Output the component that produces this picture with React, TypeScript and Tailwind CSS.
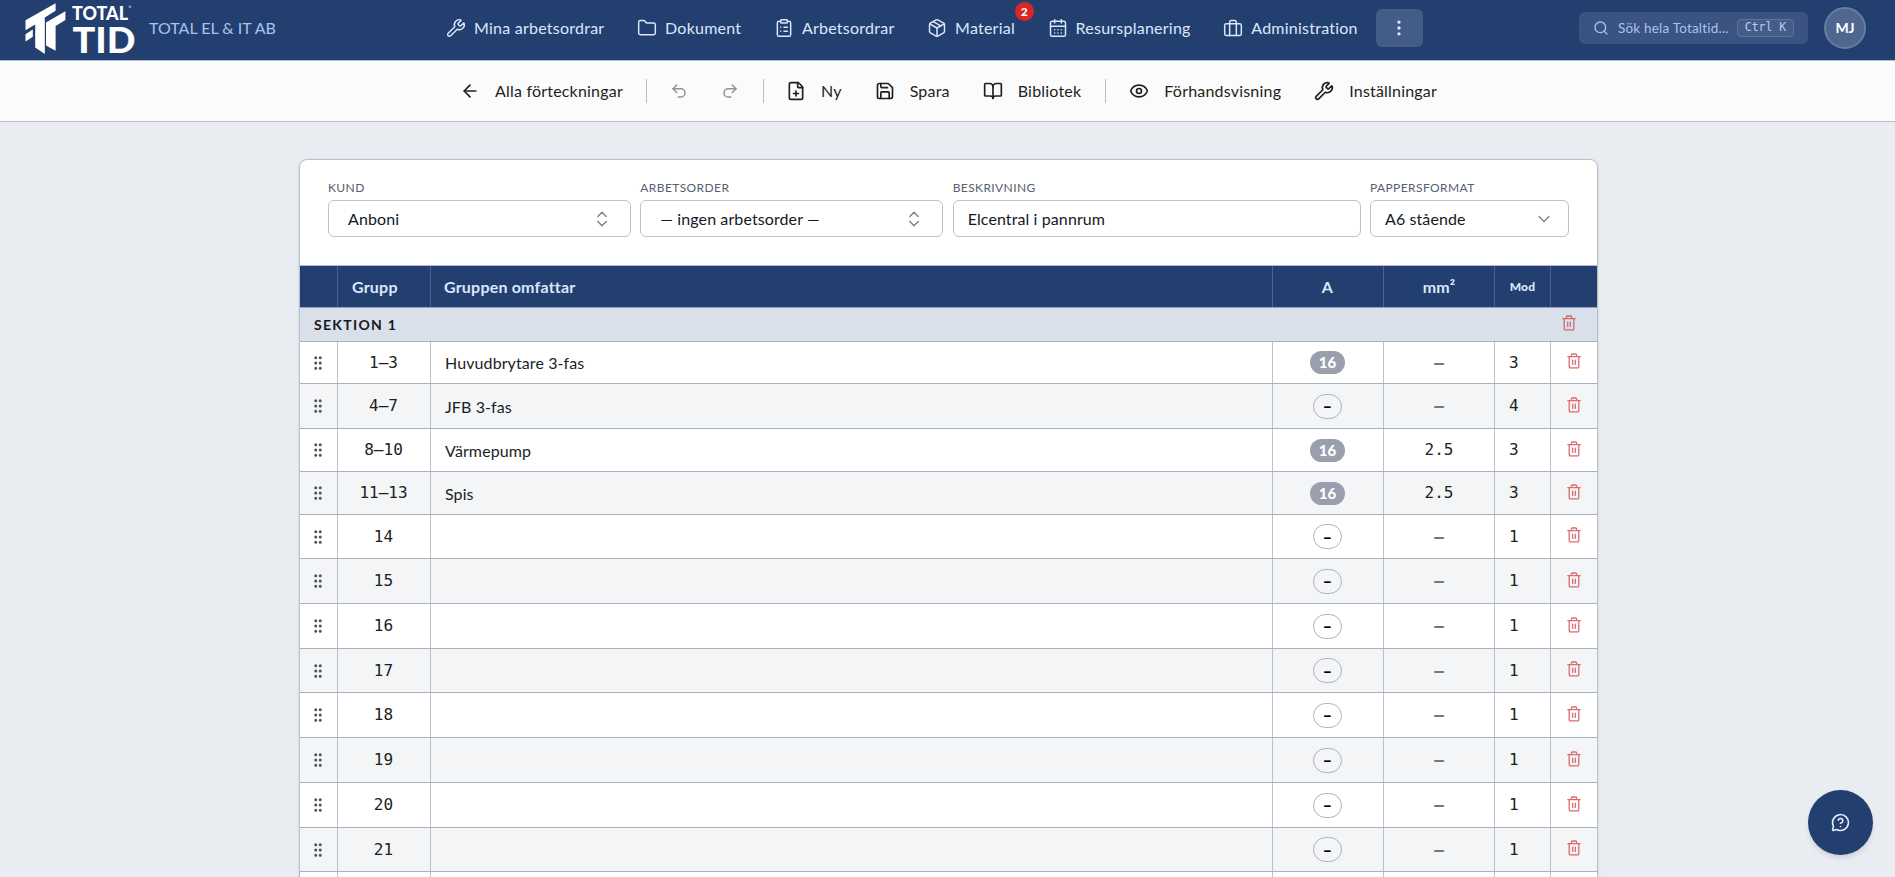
import {
  ArrowLeft,
  BookOpen,
  CalendarDays,
  ChevronDown,
  ChevronsUpDown,
  ClipboardList,
  EllipsisVertical,
  Eye,
  FilePlus,
  Folder,
  GripVertical,
  MessageCircleQuestion,
  Package,
  Redo2,
  Save,
  Search,
  Undo2,
  Wrench,
} from "lucide-react";
import { clsx } from "clsx";
import type { ReactNode } from "react";

type TRow = {
  group: string;
  text?: string;
  amp?: string;
  area?: string;
  mod: number;
  height: string;
};

const rows: TRow[] = [
  { group: "1–3", text: "Huvudbrytare 3-fas", amp: "16", mod: 3, height: "h-[42px]" },
  { group: "4–7", text: "JFB 3-fas", mod: 4, height: "h-[45px]" },
  { group: "8–10", text: "Värmepump", amp: "16", area: "2.5", mod: 3, height: "h-[43px]" },
  { group: "11–13", text: "Spis", amp: "16", area: "2.5", mod: 3, height: "h-[43px]" },
  { group: "14", mod: 1, height: "h-[44px]" },
  { group: "15", mod: 1, height: "h-[45px]" },
  { group: "16", mod: 1, height: "h-[45px]" },
  { group: "17", mod: 1, height: "h-[44px]" },
  { group: "18", mod: 1, height: "h-[45px]" },
  { group: "19", mod: 1, height: "h-[45px]" },
  { group: "20", mod: 1, height: "h-[45px]" },
  { group: "21", mod: 1, height: "h-[44px]" },
];

const columns = "grid grid-cols-[38px_93px_842px_111px_111px_56px_46px]";

const BriefcaseIcon = () => (
  <svg width="20" height="20" viewBox="0 0 24 24" fill="none" stroke="currentColor" strokeWidth="1.75" strokeLinecap="round" strokeLinejoin="round">
    <rect x="2" y="7" width="20" height="14" rx="2" />
    <path d="M16 21V5a2 2 0 0 0-2-2h-4a2 2 0 0 0-2 2v16" />
  </svg>
);

const TrashIcon = () => (
  <svg width="14" height="16" viewBox="0 0 14 16" fill="none" stroke="currentColor" strokeWidth="1.3" strokeLinecap="round" strokeLinejoin="round">
    <path d="M.8 3.6h12.4M4.4 3.4V1.9c0-.6.3-.9.9-.9h3.4c.6 0 .9.3.9.9v1.5M2.2 3.8v9.9c0 .8.4 1.2 1.2 1.2h7.2c.8 0 1.2-.4 1.2-1.2V3.8M5.7 7.2v4.2M8.3 7.2v4.2" />
  </svg>
);

const Logo = () => (
  <svg width="112" height="56" viewBox="0 0 112 56" fill="#fff" className="shrink-0 overflow-visible">
    <path d="M.5 20.3 30.6 3.3v7.4L19.8 17.6V54l-9.6-6.5V24.6L.5 30.3z" />
    <path d="M.5 34.2 7.8 29.6v7.2L.5 41.6z" />
    <path d="M21 22.6 40.4 11.3v8.6L30.6 26v24.8L21 45.6z" />
    <text x="47" y="20" fontFamily="Lato" fontWeight="900" fontSize="18.5" textLength="56" lengthAdjust="spacingAndGlyphs">TOTAL</text>
    <text x="47.5" y="53.3" fontFamily="Lato" fontWeight="900" fontSize="36.5" textLength="63" lengthAdjust="spacingAndGlyphs">TID</text>
    <circle cx="105" cy="6.8" r="1" fill="none" stroke="#fff" strokeWidth=".5" />
  </svg>
);

const NavItem = ({ icon, label, badge }: { icon: ReactNode; label: string; badge?: number }) => (
  <div className="relative flex items-center gap-2">
    {icon}
    <span>{label}</span>
    {badge && (
      <span className="absolute -top-[14px] -right-[19px] flex h-[19px] w-[19px] items-center justify-center rounded-full bg-[#dc2626] text-xs font-black text-white">
        {badge}
      </span>
    )}
  </div>
);

const ToolItem = ({ icon, label }: { icon: ReactNode; label: string }) => (
  <div className="flex items-center gap-[15px]">
    {icon}
    <span>{label}</span>
  </div>
);

const Divider = () => <div className="h-6 w-px bg-[#b9bfc9]"></div>;

const Field = ({ label, value, icon, wide }: { label: string; value: string; icon?: ReactNode; wide?: boolean }) => (
  <div>
    <div className="h-[18px] text-xs leading-[18px] tracking-[0.4px] text-[#56606f] uppercase">{label}</div>
    <div
      className={clsx(
        "mt-[3px] flex h-[37px] items-center justify-between rounded-md border border-[#bcc1ca] bg-white text-base tracking-[0.1px] text-[#15181d]",
        wide ? "pr-[18px] pl-[19px]" : "px-[14px]"
      )}
    >
      <span>{value}</span>
      {icon}
    </div>
  </div>
);

const TableRow = ({ row, odd }: { row: TRow; odd: boolean }) => (
  <div
    className={clsx(
      columns,
      row.height,
      "border-b border-[#a9b0bf] text-[#1b1e23] *:flex *:items-center *:border-r *:border-[#bcc2cc]",
      odd ? "bg-[#f3f5f7]" : "bg-white"
    )}
  >
    <div className="justify-center pr-px text-[#4b5260]">
      <GripVertical size={18} />
    </div>
    <div className="justify-center pr-px font-['DejaVu_Sans_Mono',monospace]">{row.group}</div>
    <div className="pt-px pl-[14px] tracking-[0.1px]">{row.text}</div>
    <div className="justify-center pr-px">
      {row.amp ? (
        <span className="flex h-[23px] w-[35px] items-center justify-center rounded-full bg-[#9a9fad] text-[15px] font-black text-white">
          {row.amp}
        </span>
      ) : (
        <span className="flex h-[25px] w-[29px] items-center justify-center rounded-full border border-[#adb2c0] font-black text-black">
          –
        </span>
      )}
    </div>
    <div className="justify-center font-['DejaVu_Sans_Mono',monospace]">
      {row.area ?? <span className="font-bold text-[#73777e]">–</span>}
    </div>
    <div className="pl-[14px] font-['DejaVu_Sans_Mono',monospace]">{row.mod}</div>
    <div className="justify-center border-r-0! pb-[3px] text-[#dc6b6e]">
      <TrashIcon />
    </div>
  </div>
);

const App = () => {
  return (
    <div className="h-[877px] w-full overflow-hidden bg-[#e9ecf1] font-[Lato,sans-serif] text-base">
      <header className="h-[61px] border-b border-[#a9bbdb] bg-[#233f70] text-[#dbe7fb]">
        <div className="flex h-14 items-center">
          <div className="flex w-[446px] items-center pl-[25px]">
            <Logo />
            <span className="ml-3 text-[#a9c3ee]">TOTAL EL & IT AB</span>
          </div>
          <nav className="flex items-center gap-[32.6px] tracking-[0.24px]">
            <NavItem icon={<Wrench size={20} strokeWidth={1.75} />} label="Mina arbetsordrar" />
            <NavItem icon={<Folder size={20} strokeWidth={1.75} />} label="Dokument" />
            <NavItem icon={<ClipboardList size={20} strokeWidth={1.75} />} label="Arbetsordrar" />
            <NavItem icon={<Package size={20} strokeWidth={1.75} />} label="Material" badge={2} />
            <NavItem icon={<CalendarDays size={20} strokeWidth={1.75} />} label="Resursplanering" />
            <NavItem icon={<BriefcaseIcon />} label="Administration" />
          </nav>
          <button className="ml-[18px] flex h-[38px] w-[47px] items-center justify-center rounded-md bg-[#445d88]">
            <EllipsisVertical size={20} />
          </button>
          <div className="mr-[29px] ml-auto flex items-center">
            <div className="flex h-8 w-[229px] items-center rounded-md bg-[#3a5380] pl-[14px]">
              <Search size={16} className="text-[#a9c3ee]" />
              <span className="ml-[9px] w-[119px] text-[13.5px] tracking-[0.2px] whitespace-nowrap text-[#a9c3ee]">Sök hela Totaltid...</span>
              <span className="flex h-[18px] w-[57px] items-center justify-center rounded-sm border border-[#5c7299] bg-[#445d88] font-['DejaVu_Sans_Mono',monospace] text-[11.5px] text-[#b9cdf0]">
                Ctrl K
              </span>
            </div>
            <div className="ml-[16px] flex h-[42px] w-[42px] items-center justify-center rounded-full border-2 border-[#667ca3] bg-[#4f668f] text-sm font-bold text-white">
              MJ
            </div>
          </div>
        </div>
      </header>

      <div className="flex h-[61px] items-center border-b border-[#b7bec9] bg-[#fbfbfb] pl-[460px] tracking-[0.2px] text-[#1d1f23]">
        <ToolItem icon={<ArrowLeft size={20} />} label="Alla förteckningar" />
        <div className="ml-[23px] flex items-center">
          <Divider />
          <div className="flex w-[116px] items-center gap-[33px] pl-[23px] text-[#8f9296]">
            <Undo2 size={18} />
            <Redo2 size={18} />
          </div>
          <Divider />
        </div>
        <div className="ml-[22px] flex items-center gap-[33px]">
          <ToolItem icon={<FilePlus size={20} />} label="Ny" />
          <ToolItem icon={<Save size={20} />} label="Spara" />
          <ToolItem icon={<BookOpen size={20} />} label="Bibliotek" />
        </div>
        <div className="ml-[24px] flex items-center gap-[23px]">
          <Divider />
          <div className="flex items-center gap-[33px]">
            <ToolItem icon={<Eye size={20} />} label="Förhandsvisning" />
            <ToolItem icon={<Wrench size={20} />} label="Inställningar" />
          </div>
        </div>
      </div>

      <main className="pt-[37px] pl-[299px]">
        <div className="w-[1299px] overflow-hidden rounded-t-lg border border-[#b7bfcc] bg-white shadow-sm">
          <div className="grid h-[106px] grid-cols-[303px_303px_408px_199px] gap-x-[9.33px] border-b border-[#a9bbdb] px-7 pt-[19px]">
            <Field label="Kund" value="Anboni" wide icon={<ChevronsUpDown size={20} strokeWidth={1.75} className="text-[#7d828a]" />} />
            <Field label="Arbetsorder" value="— ingen arbetsorder —" wide icon={<ChevronsUpDown size={20} strokeWidth={1.75} className="text-[#7d828a]" />} />
            <Field label="Beskrivning" value="Elcentral i pannrum" />
            <Field label="Pappersformat" value="A6 stående" icon={<ChevronDown size={20} className="text-[#8b9097]" />} />
          </div>

          <div className={clsx(columns, "h-[42px] border-b border-[#8da0c2] bg-[#233f70] font-bold tracking-[0.2px] text-[#dbe7fb] *:flex *:items-center *:border-r *:border-[#4a628d]")}>
            <div></div>
            <div className="pt-px pl-[14px]">Grupp</div>
            <div className="pt-px pl-[13px]">Gruppen omfattar</div>
            <div className="justify-center pt-px pr-px">A</div>
            <div className="justify-center pt-px">mm²</div>
            <div className="justify-center text-xs font-black">Mod</div>
            <div className="border-r-0!"></div>
          </div>

          <div className="flex h-[34px] items-center justify-between border-b border-[#a9b0bf] bg-[#dae0e9] pr-[21px] pl-[14px]">
            <span className="text-sm font-bold tracking-[1.3px] text-[#15181d]">SEKTION 1</span>
            <span className="pb-[3px] text-[#cf6a70]">
              <TrashIcon />
            </span>
          </div>

          {rows.map((row, index) => (
            <TableRow key={row.group} row={row} odd={index % 2 === 1} />
          ))}
          {/* top edge of the next, still empty row */}
          <div className={clsx(columns, "h-[45px] *:border-r *:border-[#bcc2cc]")}>
            <div></div>
            <div></div>
            <div></div>
            <div></div>
            <div></div>
            <div></div>
          </div>
        </div>
      </main>

      <button className="fixed right-[22px] bottom-[22px] flex h-[65px] w-[65px] items-center justify-center rounded-full bg-[#233f70] text-[#e6effd] shadow-md">
        <MessageCircleQuestion size={19} />
      </button>
    </div>
  );
};

export default App;
